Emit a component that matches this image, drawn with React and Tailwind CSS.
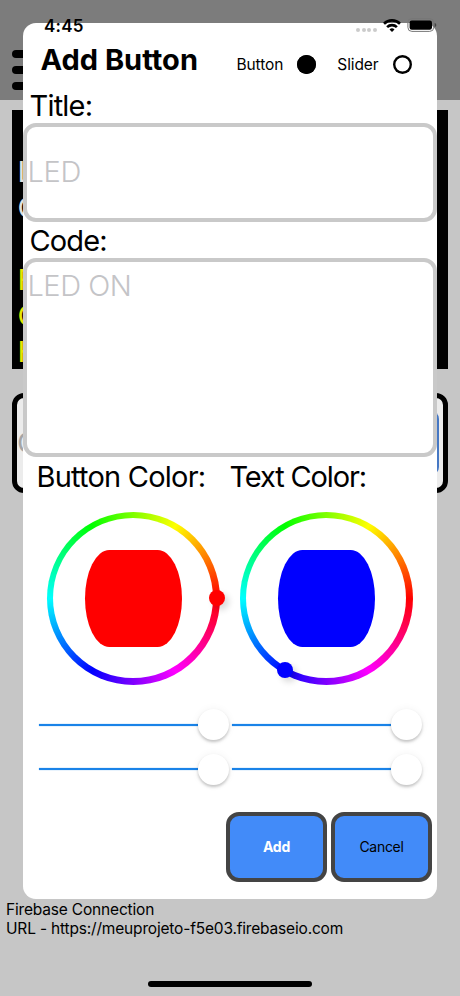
import React, { useState } from 'react';

const StatusBar = () => (
  <div className="absolute inset-x-0 top-0 h-10 flex items-start justify-between pl-[44px] pr-[23px] pt-[16px]">
    <span className="text-[17px] leading-5 font-semibold tracking-[0.2px]">4:45</span>
    <div className="flex items-start">
      <div className="flex gap-[1.7px] mt-[12px] mr-[6px]">
        <i className="size-[4px] rounded-full bg-[#cbcbcb]" />
        <i className="size-[4px] rounded-full bg-[#cbcbcb]" />
        <i className="size-[4px] rounded-full bg-[#cbcbcb]" />
        <i className="size-[4px] rounded-full bg-[#cbcbcb]" />
      </div>
      <svg width="18" height="13" viewBox="0 0 18 13" className="mt-[2.5px] mr-[6px]">
        <g fill="none" stroke="#000" strokeWidth="2.6">
          <path d="M1 4.7a11.4 11.4 0 0 1 16 0" />
          <path d="M4.1 8.1a7 7 0 0 1 9.8 0" />
        </g>
        <path d="M9 13 L6.5 10.5a3.6 3.6 0 0 1 5 0Z" />
      </svg>
      <svg width="30" height="14" viewBox="0 0 30 14" className="mt-[2px]">
        <rect x="0.9" y="0.6" width="25.8" height="12.8" rx="4" fill="none" stroke="#777" strokeWidth="1" />
        <rect x="2.6" y="2.5" width="22.4" height="9.2" rx="2.2" />
        <path d="M27.7 4.9v4.2c1-.4 1.6-1.2 1.6-2.1s-.6-1.7-1.6-2.1Z" fill="#444" />
      </svg>
    </div>
  </div>
);

// Screen that stays visible around the modal
const HomeScreen = () => (
  <div className="h-full flex flex-col">
    <div className="h-[100px] bg-[#7c7c7c] pl-[12px] pt-[50px] flex flex-col gap-[8px]">
      <div className="w-[40px] h-[8px] rounded-full bg-black" />
      <div className="w-[40px] h-[8px] rounded-full bg-black" />
      <div className="w-[40px] h-[8px] rounded-full bg-black" />
    </div>
    <div className="mx-[12px] mt-[10px] h-[259px] bg-black pl-[5.5px] pt-[44px] text-[29px] leading-[36px] text-[#e0e0e0]">
      <p>L</p>
      <p>C</p>
      <div className="mt-[36px] text-[#e6e600]">
        <p>F</p>
        <p>C</p>
        <p>H</p>
      </div>
    </div>
    <div className="mx-[12px] mt-[24px] h-[100px] rounded-[12px] border-[5px] border-black bg-[#ececec] flex items-center justify-between pr-[4px]">
      <span className="text-[29px] text-[#a5a5a5]">C</span>
      <div className="w-[90px] h-[64px] rounded-[8px] bg-[#4678c4]" />
    </div>
    <div className="mt-[407px] pl-[6px] text-[15.5px] leading-[19px] tracking-[-0.18px]">
      <p>Firebase Connection</p>
      <p>URL - https://meuprojeto-f5e03.firebaseio.com</p>
    </div>
  </div>
);

const ColorWheel = ({ color, angle }) => {
  const rad = (angle * Math.PI) / 180;
  const x = 87 + 83.5 * Math.cos(rad);
  const y = 86.5 + 83.5 * Math.sin(rad);

  return (
    <div className="relative size-[173px] rounded-full p-[6.5px] bg-[conic-gradient(from_90deg,#f00,#f0f,#00f,#0ff,#0f0,#ff0,#f00)]">
      <div className="size-full rounded-full bg-white flex items-center justify-center">
        <div className="size-[97px] rounded-[25%/50%]" style={{ backgroundColor: color }} />
      </div>
      <div
        className="absolute size-[16px] -ml-[8px] -mt-[8px] rounded-full shadow-[4px_4px_6px_rgba(0,0,0,0.15)]"
        style={{ left: x, top: y, backgroundColor: color }}
      />
    </div>
  );
};

const Slider = () => (
  <div className="flex items-center w-[190px] h-[31px]">
    <div className="w-[158.5px] h-[2px] bg-[#1a83e8] shadow-[0_0_1px_#1a83e8]" />
    <div className="relative size-[31px] rounded-full bg-white shadow-[0_2px_3px_rgba(0,0,0,0.22),0_0_8px_rgba(0,0,0,0.05)]" />
  </div>
);

const Radio = ({ label, selected, onClick }) => (
  <button className="flex items-center" onClick={onClick}>
    <span className="text-[15.5px] tracking-[-0.1px] mr-[14px] pt-px">{label}</span>
    <span
      className={`size-[19px] rounded-full shadow-[inset_0_0_0_2.4px_#000] ${selected ? 'bg-black' : 'bg-white'}`}
    />
  </button>
);

const AddButtonModal = () => {
  const [type, setType] = useState('button');
  const [title, setTitle] = useState('');
  const [code, setCode] = useState('');

  return (
    <div className="absolute left-[23px] top-[23px] w-[414px] h-[876px] rounded-[13px] bg-white flex flex-col">
      <div className="h-[66px] pl-[17.5px] pr-[25.5px] flex items-start justify-between">
        <h1 className="mt-[18.5px] text-[29px] leading-[36px] font-bold">Add Button</h1>
        <div className="mt-[29px] flex gap-[21px] h-[24px]">
          <Radio label="Button" selected={type === 'button'} onClick={() => setType('button')} />
          <Radio label="Slider" selected={type === 'slider'} onClick={() => setType('slider')} />
        </div>
      </div>

      <label className="h-[33.5px] pl-[6.5px] text-[29px] leading-[33px] tracking-[-0.8px]">Title:</label>
      <input
        className="h-[99.5px] w-full rounded-[13px] border-4 border-[#c9c9c9] bg-white pb-[2px] pl-[0.5px] text-[29px] font-light tracking-[-0.3px] placeholder:text-[#c4c4c7] outline-none"
        placeholder="LED"
        value={title}
        onChange={(e) => setTitle(e.target.value)}
      />
      <label className="h-[36px] pl-[6.5px] text-[29px] leading-[37px] tracking-[-0.9px]">Code:</label>
      <textarea
        className="h-[199px] w-full resize-none rounded-[13px] border-4 border-[#c9c9c9] bg-white pt-[6px] pl-[0.5px] text-[29px] leading-[36px] font-light tracking-[-0.5px] placeholder:text-[#c4c4c7] outline-none"
        placeholder="LED ON"
        value={code}
        onChange={(e) => setCode(e.target.value)}
      />

      <div className="flex h-[54.5px] pl-[13.5px] text-[29px] leading-[39px]">
        <span className="w-[193px] tracking-[-0.78px]">Button Color:</span>
        <span className="whitespace-nowrap tracking-[-1.15px]">Text Color:</span>
      </div>

      <div className="flex gap-[20px] pl-[23.5px]">
        <ColorWheel color="#ff0000" angle={0} />
        <ColorWheel color="#0000ff" angle={120} />
      </div>

      <div className="mt-[24.5px] pl-[16px] grid grid-cols-[193px_190px] gap-y-[13.5px]">
        <Slider />
        <Slider />
        <Slider />
        <Slider />
      </div>

      <div className="mt-[27px] pr-[5px] flex justify-end gap-[4px]">
        <button className="w-[101px] h-[70px] rounded-[13px] border-4 border-[#444] bg-[#428bf9] text-[14px] tracking-[-0.2px] font-bold text-white">
          Add
        </button>
        <button className="w-[101px] h-[70px] rounded-[13px] border-4 border-[#444] bg-[#428bf9] text-[14px] tracking-[-0.3px]">
          Cancel
        </button>
      </div>
    </div>
  );
};

const App = () => (
  <div className="relative w-[460px] h-[996px] overflow-hidden bg-[#c6c6c6] text-black font-['Inter',sans-serif]">
    <HomeScreen />
    <AddButtonModal />
    <StatusBar />
    <div className="absolute bottom-[9.5px] left-[148px] w-[164px] h-[5.5px] rounded-full bg-black" />
  </div>
);

export default App;
